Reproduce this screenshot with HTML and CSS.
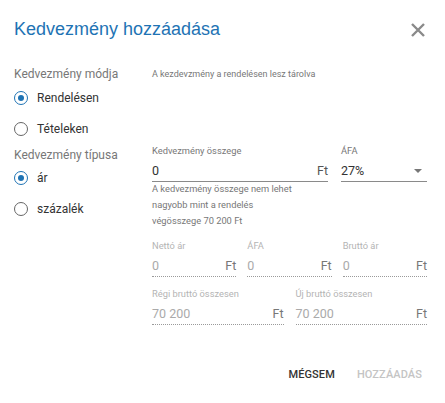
FILE: index.html
```html
<!DOCTYPE html>
<html lang="hu">
<head>
<meta charset="utf-8">
<title>Kedvezmény hozzáadása</title>
<link rel="stylesheet" href="styles.css">
</head>
<body>
<div class="dialog">
  <header class="head">
    <h1 class="title">Kedvezmény hozzáadása</h1>
    <button class="close" aria-label="Bezárás">
      <svg width="14" height="14" viewBox="0 0 14 14"><path d="M1 1L13 13M13 1L1 13" stroke="#8a8a8a" stroke-width="2.4" fill="none"/></svg>
    </button>
  </header>
  <div class="body">
    <div class="left">
      <div class="group-label">Kedvezmény módja</div>
      <label class="radio checked"><span class="circle"></span>Rendelésen</label>
      <label class="radio"><span class="circle"></span>Tételeken</label>
      <div class="group-label second">Kedvezmény típusa</div>
      <label class="radio checked"><span class="circle"></span>ár</label>
      <label class="radio"><span class="circle"></span>százalék</label>
    </div>
    <div class="right">
      <p class="info">A kezdevzmény a rendelésen lesz tárolva</p>
      <div class="row row-main">
        <div class="field">
          <div class="flabel">Kedvezmény összege</div>
          <div class="control"><span class="value">0</span><span class="suffix">Ft</span></div>
        </div>
        <div class="field">
          <div class="flabel">ÁFA</div>
          <div class="control"><span class="value">27%</span><span class="arrow"></span></div>
        </div>
      </div>
      <div class="helper">A kedvezmény összege nem lehet<br>nagyobb mint a rendelés<br>végösszege 70 200 Ft</div>
      <div class="row row-three">
        <div class="field disabled">
          <div class="flabel">Nettó ár</div>
          <div class="control"><span class="value">0</span><span class="suffix">Ft</span></div>
        </div>
        <div class="field disabled">
          <div class="flabel">ÁFA</div>
          <div class="control"><span class="value">0</span><span class="suffix">Ft</span></div>
        </div>
        <div class="field disabled">
          <div class="flabel">Bruttó ár</div>
          <div class="control"><span class="value">0</span><span class="suffix">Ft</span></div>
        </div>
      </div>
      <div class="row row-two">
        <div class="field disabled">
          <div class="flabel">Régi bruttó összesen</div>
          <div class="control"><span class="value">70 200</span><span class="suffix">Ft</span></div>
        </div>
        <div class="field disabled">
          <div class="flabel">Új bruttó összesen</div>
          <div class="control"><span class="value">70 200</span><span class="suffix">Ft</span></div>
        </div>
      </div>
    </div>
  </div>
  <footer class="actions">
    <button class="btn">MÉGSEM</button>
    <button class="btn btn-disabled">HOZZÁADÁS</button>
  </footer>
</div>
</body>
</html>
```

FILE: styles.css
```css
* { box-sizing: border-box; }
html, body { margin: 0; padding: 0; background: #fff; }
body { font-family: Roboto, "Noto Sans", sans-serif; color: #333; width: 445px; height: 403px; overflow: hidden; }

.dialog { padding: 0 18px 0 14px; }

.head { display: flex; align-items: center; justify-content: space-between; height: 58px; padding-top: 1px; }
.title { margin: 0; font-family: "Liberation Sans", Arial, sans-serif; font-weight: 400; font-size: 18px; color: #1e73b4; }
.close { border: 0; background: none; padding: 0; margin-right: 2px; width: 14px; height: 14px; display: flex; cursor: pointer; }

.body { display: flex; padding-top: 9px; }
.left { width: 138px; flex: none; }
.right { flex: 1; }

.group-label { font-size: 12px; line-height: 14px; color: #777; margin-bottom: 2px; }
.group-label.second { margin-top: 4px; margin-bottom: 1px; }
.radio { display: flex; align-items: center; height: 30px; font-size: 12px; color: #333; }
.radio + .radio { height: 31px; }
.circle { width: 14px; height: 14px; border-radius: 50%; border: 1.5px solid #666; margin-right: 9px; flex: none; position: relative; }
.radio.checked .circle { border-color: #1e73b4; }
.radio.checked .circle::after { content: ""; position: absolute; left: 2.5px; top: 2.5px; width: 6px; height: 6px; border-radius: 50%; background: #1e73b4; }

.info { margin: 0; padding-top: 1px; font-size: 9px; line-height: 12px; color: #777; height: 78px; }

.row { display: grid; column-gap: 12px; }
.row-main { grid-template-columns: 1fr 86px; column-gap: 13px; }
.row-three { grid-template-columns: 1fr 1fr 1fr; margin-top: 11px; column-gap: 11px; }
.row-two { grid-template-columns: 1fr 1fr; margin-top: 11px; }

.flabel { font-size: 9.3px; line-height: 12px; color: #777; margin-bottom: 3px; }
.control { height: 22px; display: flex; align-items: center; justify-content: space-between; border-bottom: 1px solid #8a8a8a; font-size: 12.5px; color: #333; }
.suffix { color: #555; }
.arrow { width: 0; height: 0; border-left: 4px solid transparent; border-right: 4px solid transparent; border-top: 4px solid #777; margin-right: 5px; }

.helper { font-size: 9.3px; line-height: 16px; color: #777; margin-top: -1px; }

.field.disabled .flabel { color: #b4b4b4; }
.field.disabled .control { border-bottom: 1px dotted #9a9a9a; color: #aaa; }
.field.disabled .suffix { color: #777; }

.actions { display: flex; justify-content: flex-end; gap: 22px; margin-top: 43px; padding-right: 5px; }
.btn { border: 0; background: none; padding: 0; font-family: Roboto, sans-serif; font-size: 11px; font-weight: 500; color: #333; letter-spacing: 0.1px; }
.btn-disabled { color: #c4c4c4; }
```
